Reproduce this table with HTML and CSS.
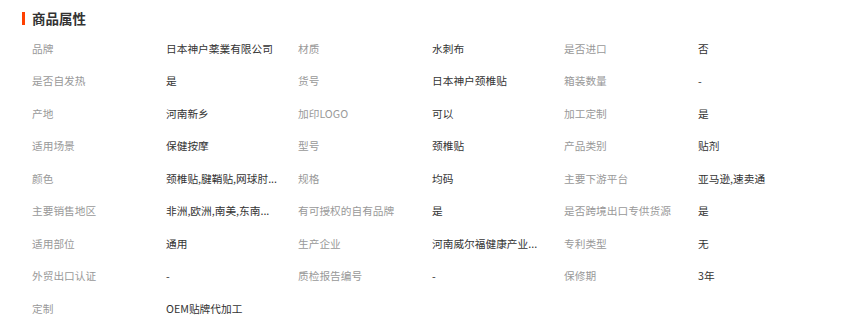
FILE: index.html
```html
<!DOCTYPE html>
<html lang="zh-CN">
<head>
<meta charset="utf-8">
<link rel="stylesheet" href="styles.css">
</head>
<body>
<section class="attrs">
  <h2 class="attrs-title">商品属性</h2>
  <div class="attrs-grid">
    <div class="k">品牌</div><div class="v">日本神户薬業有限公司</div>
    <div class="k">材质</div><div class="v">水刺布</div>
    <div class="k">是否进口</div><div class="v">否</div>

    <div class="k">是否自发热</div><div class="v">是</div>
    <div class="k">货号</div><div class="v">日本神户颈椎贴</div>
    <div class="k">箱装数量</div><div class="v">-</div>

    <div class="k">产地</div><div class="v">河南新乡</div>
    <div class="k">加印LOGO</div><div class="v">可以</div>
    <div class="k">加工定制</div><div class="v">是</div>

    <div class="k">适用场景</div><div class="v">保健按摩</div>
    <div class="k">型号</div><div class="v">颈椎贴</div>
    <div class="k">产品类别</div><div class="v">贴剂</div>

    <div class="k">颜色</div><div class="v">颈椎贴,腱鞘贴,网球肘...</div>
    <div class="k">规格</div><div class="v">均码</div>
    <div class="k">主要下游平台</div><div class="v">亚马逊,速卖通</div>

    <div class="k">主要销售地区</div><div class="v">非洲,欧洲,南美,东南...</div>
    <div class="k">有可授权的自有品牌</div><div class="v">是</div>
    <div class="k">是否跨境出口专供货源</div><div class="v">是</div>

    <div class="k">适用部位</div><div class="v">通用</div>
    <div class="k">生产企业</div><div class="v">河南威尔福健康产业...</div>
    <div class="k">专利类型</div><div class="v">无</div>

    <div class="k">外贸出口认证</div><div class="v">-</div>
    <div class="k">质检报告编号</div><div class="v">-</div>
    <div class="k">保修期</div><div class="v">3年</div>

    <div class="k">定制</div><div class="v">OEM贴牌代加工</div>
  </div>
</section>
</body>
</html>
```

FILE: styles.css
```css
html, body {
  margin: 0;
  padding: 0;
  background: #fff;
}
body {
  font-family: "Noto Sans CJK SC", "Noto Sans", sans-serif;
  font-size: 10.7px;
  color: #333;
}
.attrs {
  padding: 11px 0 0 22px;
}
.attrs-title {
  margin: 0;
  display: flex;
  align-items: center;
  gap: 7px;
  height: 14px;
  line-height: 14px;
  font-size: 13.5px;
  font-weight: bold;
  color: #333;
}
.attrs-title::before {
  content: "";
  width: 3px;
  height: 13px;
  background: #ff4000;
}
.attrs-grid {
  margin: 6.75px 0 0 10px;
  display: grid;
  grid-template-columns: 134px 132px 134px 132px 134px 132px;
  grid-auto-rows: 32.5px;
  align-items: center;
}
.k {
  color: #999;
  white-space: nowrap;
}
.v {
  color: #333;
  white-space: nowrap;
}
```
